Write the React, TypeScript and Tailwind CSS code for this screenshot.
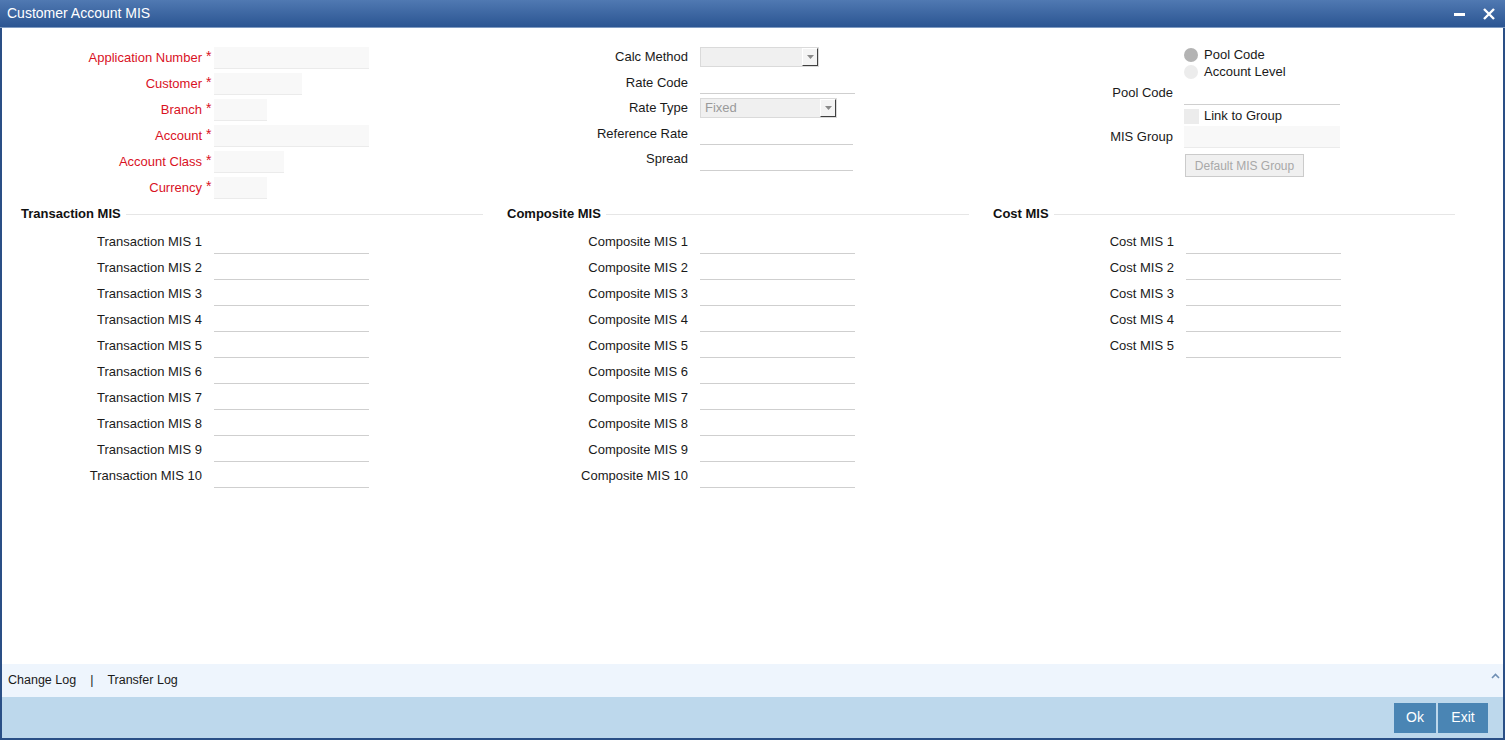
import React from 'react';

const FONT = { fontFamily: '"Liberation Sans", Arial, sans-serif' };

const TOP_LEFT: { label: string; w: string }[] = [
  { label: 'Application Number', w: 'w-[155px]' },
  { label: 'Customer',           w: 'w-[88px]' },
  { label: 'Branch',             w: 'w-[53px]' },
  { label: 'Account',            w: 'w-[155px]' },
  { label: 'Account Class',      w: 'w-[70px]' },
  { label: 'Currency',           w: 'w-[53px]' },
];

const nums = (n: number) => Array.from({ length: n }, (_, i) => i + 1);

function Label({ children, red }: { children: React.ReactNode; red?: boolean }) {
  return (
    <div className={'w-[181px] shrink-0 text-right text-[13px] ' + (red ? 'text-[#d9121f]' : 'text-[#1a1a1a]')}>
      {children}
    </div>
  );
}

function Gap({ star }: { star?: boolean }) {
  return (
    <div className="w-[12px] shrink-0 pl-[4px] text-[14px] leading-none text-[#d9121f] -mt-[4px]">
      {star ? '*' : ''}
    </div>
  );
}

function LineInput({ w = 'w-[155px]' }: { w?: string }) {
  return <div className={w + ' h-[21px] border-b border-[#cfcfcf] bg-white mt-[3px]'} />;
}

function ReqInput({ w }: { w: string }) {
  return <div className={w + ' h-[22px] bg-[#f8f8f8] border-b border-[#ebebeb]'} />;
}

function Select({ w, value }: { w: string; value?: string }) {
  return (
    <div className={w + ' h-[20px] flex items-center bg-[#f0f0f0] border border-[#dadada] pl-[4px]'}>
      <span className="flex-1 text-[13px] text-[#9a9a9a]">{value}</span>
      <div className="w-[16px] h-[18px] bg-[#f4f4f4] border-r border-b border-[#404040] border-l border-t border-l-white border-t-white flex items-center justify-center">
        <svg width="7" height="4" viewBox="0 0 7 4"><path d="M0 0h7L3.5 4z" fill="#8a8a8a" /></svg>
      </div>
    </div>
  );
}

function Heading({ title }: { title: string }) {
  return (
    <div className="flex items-center h-[20px]">
      <span className="text-[13px] font-bold text-[#111]">{title}</span>
      <div className="flex-1 ml-[5px] h-px bg-[#e6e6e6]" />
    </div>
  );
}

function MisRows({ prefix, count }: { prefix: string; count: number }) {
  return (
    <div className="flex flex-col mt-[5px]">
      {nums(count).map(n => (
        <div key={n} className="flex items-center h-[26px]">
          <Label>{prefix} {n}</Label>
          <Gap />
          <LineInput />
        </div>
      ))}
    </div>
  );
}

export default function App() {
  return (
    <div className="w-[1505px] h-[740px] flex flex-col bg-white overflow-hidden" style={FONT}>
      {/* Title bar */}
      <div className="h-[28px] shrink-0 flex items-center justify-between pl-[7px] pr-[10px] bg-gradient-to-b from-[#5079b2] to-[#2b5592] border-b border-[#7f9bc2]">
        <span className="text-[14px] text-white">Customer Account MIS</span>
        <div className="flex items-center gap-[18px]">
          <svg width="11" height="11" viewBox="0 0 11 11"><rect x="0" y="5" width="11" height="3" fill="#fff" /></svg>
          <svg width="12" height="12" viewBox="0 0 12 12"><path d="M1 1L11 11M11 1L1 11" stroke="#fff" strokeWidth="2.4" /></svg>
        </div>
      </div>

      <div className="flex-1 flex flex-col border-l-2 border-r-2 border-b-2 border-[#2a4f86] min-h-0">
        {/* Body */}
        <div className="flex-1 min-h-0 pl-[19px] pt-[16px]">
          {/* top fields */}
          <div className="flex gap-[24px] h-[160px]">
            <div className="w-[462px] flex flex-col pt-[1px]">
              {TOP_LEFT.map(f => (
                <div key={f.label} className="flex items-center h-[26px]">
                  <Label red>{f.label}</Label>
                  <Gap star />
                  <ReqInput w={f.w} />
                </div>
              ))}
            </div>

            <div className="w-[462px] flex flex-col">
              <div className="flex items-center h-[25.5px]">
                <Label>Calc Method</Label><Gap />
                <Select w="w-[119px]" />
              </div>
              <div className="flex items-center h-[25.5px]">
                <Label>Rate Code</Label><Gap />
                <LineInput />
              </div>
              <div className="flex items-center h-[25.5px]">
                <Label>Rate Type</Label><Gap />
                <Select w="w-[137px]" value="Fixed" />
              </div>
              <div className="flex items-center h-[25.5px]">
                <Label>Reference Rate</Label><Gap />
                <LineInput w="w-[153px]" />
              </div>
              <div className="flex items-center h-[25.5px]">
                <Label>Spread</Label><Gap />
                <LineInput w="w-[153px]" />
              </div>
            </div>

            <div className="w-[462px] flex flex-col pt-[2px]">
              <div className="flex items-center h-[17px]">
                <div className="w-[191px] shrink-0" />
                <span className="w-[14px] h-[14px] rounded-full bg-[#b3b3b3]" />
                <span className="ml-[6px] text-[13px] text-[#1a1a1a]">Pool Code</span>
              </div>
              <div className="flex items-center h-[17px]">
                <div className="w-[191px] shrink-0" />
                <span className="w-[14px] h-[14px] rounded-full bg-[#ececec]" />
                <span className="ml-[6px] text-[13px] text-[#1a1a1a]">Account Level</span>
              </div>
              <div className="flex items-center h-[26px]">
                <div className="w-[180px] shrink-0 text-right text-[13px] text-[#1a1a1a]">Pool Code</div>
                <div className="w-[11px] shrink-0" />
                <LineInput w="w-[156px]" />
              </div>
              <div className="flex items-center h-[20px]">
                <div className="w-[191px] shrink-0" />
                <span className="w-[15px] h-[15px] bg-[#ececec]" />
                <span className="ml-[5px] text-[13px] text-[#1a1a1a]">Link to Group</span>
              </div>
              <div className="flex items-center h-[22px]">
                <div className="w-[180px] shrink-0 text-right text-[13px] text-[#1a1a1a]">MIS Group</div>
                <div className="w-[11px] shrink-0" />
                <ReqInput w="w-[156px]" />
              </div>
              <div className="flex items-center mt-[6px]">
                <div className="w-[192px] shrink-0" />
                <div className="w-[119px] h-[23px] flex items-center justify-center bg-[#f0f0f0] border border-[#cbcbcb] text-[12px] text-[#a8a8a8]">
                  Default MIS Group
                </div>
              </div>
            </div>
          </div>

          {/* MIS sections */}
          <div className="flex gap-[24px]">
            <div className="w-[462px]">
              <Heading title="Transaction MIS" />
              <MisRows prefix="Transaction MIS" count={10} />
            </div>
            <div className="w-[462px]">
              <Heading title="Composite MIS" />
              <MisRows prefix="Composite MIS" count={10} />
            </div>
            <div className="w-[462px]">
              <Heading title="Cost MIS" />
              <MisRows prefix="Cost MIS" count={5} />
            </div>
          </div>
        </div>

        {/* Footer links */}
        <div className="h-[33px] shrink-0 flex items-center justify-between bg-[#eef5fd] pl-[6px] pr-[3px]">
          <span className="text-[12.5px] text-[#1a1a1a]">
            Change Log<span className="mx-[14px]">|</span>Transfer Log
          </span>
          <svg width="9" height="6" viewBox="0 0 9 6" className="-mt-[9px]"><path d="M1 5L4.5 1.5L8 5" stroke="#6f8fb4" strokeWidth="1.6" fill="none" /></svg>
        </div>

        {/* Buttons */}
        <div className="h-[41px] shrink-0 flex items-center justify-end gap-[2px] bg-[#bdd8ec] pr-[15px]">
          <button className="w-[42px] h-[30px] bg-[#4a85b4] text-white text-[14px]">Ok</button>
          <button className="w-[50px] h-[30px] bg-[#4a85b4] text-white text-[14px]">Exit</button>
        </div>
      </div>
    </div>
  );
}
